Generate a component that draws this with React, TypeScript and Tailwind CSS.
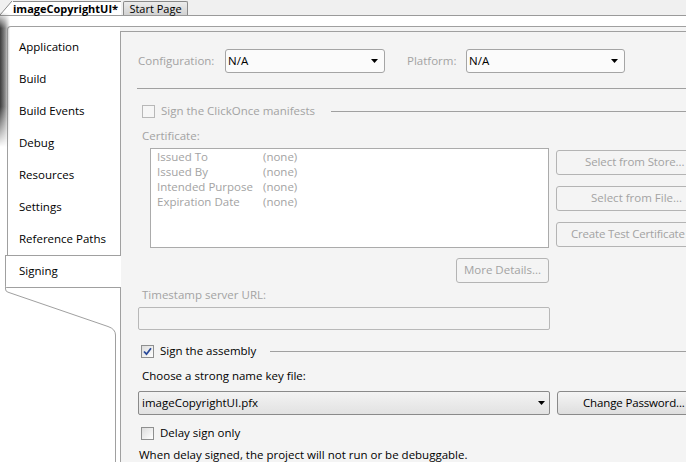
import React from "react";

const FONT = { fontFamily: '"Segoe UI", "Open Sans", sans-serif' };

function Arrow() {
  return (
    <svg width="7" height="4" viewBox="0 0 7 4" className="shrink-0">
      <polygon points="0,0 7,0 3.5,4" fill="#000" />
    </svg>
  );
}

function Check({ checked, disabled }: { checked?: boolean; disabled?: boolean }) {
  return (
    <div
      className={
        "w-[13px] h-[13px] shrink-0 border flex items-center justify-center " +
        (disabled
          ? "border-[#b8b8b8] bg-[#f6f6f6]"
          : "border-[#8e8f8f] bg-gradient-to-br from-[#dcdcdc] to-[#ffffff]")
      }
    >
      {checked && (
        <svg width="9" height="9" viewBox="0 0 9 9">
          <path d="M1 4.5 L3.5 7.2 L8 1.2" stroke="#2a4a9a" strokeWidth="1.8" fill="none" />
        </svg>
      )}
    </div>
  );
}

const navItems = [
  "Application",
  "Build",
  "Build Events",
  "Debug",
  "Resources",
  "Settings",
  "Reference Paths",
];

const certRows = [
  ["Issued To", "(none)"],
  ["Issued By", "(none)"],
  ["Intended Purpose", "(none)"],
  ["Expiration Date", "(none)"],
];

export default function App() {
  return (
    <div
      className="relative w-[686px] h-[462px] overflow-hidden bg-white text-[11.5px] text-black leading-none"
      style={FONT}
    >
      {/* document tab strip */}
      <div className="h-[16px] bg-[#f0f0f0] border-b border-[#9a9a9a] flex items-end">
        <svg width="13" height="15" viewBox="0 0 13 15" className="shrink-0">
          <polygon points="0,15 12,1 13,1 13,15" fill="#ffffff" />
          <line x1="0" y1="15" x2="12" y2="1" stroke="#8a8a8a" />
        </svg>
        <div className="h-[14px] w-[108px] bg-white border-t border-[#8a8a8a] font-bold text-[11px] flex items-center pb-[1px]">
          imageCopyrightUI*
        </div>
        <div className="ml-[2px] h-[14px] w-[65px] border border-b-0 border-[#8a8a8a] rounded-t-[2px] bg-gradient-to-b from-[#ececec] to-[#d2d2d2] flex items-center justify-center text-[11px] pb-[1px]">
          Start Page
        </div>
      </div>
      <div className="h-[10px] bg-white" />

      {/* frame */}
      <div className="flex h-[436px]">
        {/* nav */}
        <div className="w-[120px] shrink-0 flex flex-col bg-white">
          <div className="ml-[7px] border-l border-t border-[#a0a0a0] rounded-tl-[4px] pt-[4px]">
            {navItems.map((n) => (
              <div key={n} className="h-[32px] flex items-center pl-[11px] pb-[1px]">
                {n}
              </div>
            ))}
          </div>
          <div className="relative z-10 ml-[5px] w-[116px] h-[33px] border-l border-t border-b border-[#a0a0a0] rounded-bl-[2px] bg-white flex items-center pl-[13px] pb-[1px]">
            Signing
          </div>
          <svg width="120" height="60" viewBox="0 0 120 60" className="shrink-0 -mt-[1px]">
            <path
              d="M5.5 0 L5.5 2 Q5.5 4.5 8 5.2 L108 39.5 Q115.5 42 115.5 48 L115.5 60"
              stroke="#a0a0a0"
              fill="none"
            />
          </svg>
          <div className="flex-1 ml-[115px] border-l border-[#a0a0a0]" />
        </div>

        {/* content */}
        <div className="flex-1 border-t border-[#a0a0a0] bg-[#f4f4f4] pt-[4px] flex flex-col min-w-0">
          <div className="flex-1 border-t border-l border-[#a0a0a0] bg-[#f4f4f4] flex flex-col">
            {/* config row */}
            <div className="mt-[17px] ml-[17px] flex items-center h-[24px]">
              <div className="w-[87px] text-[#a3a3a3] pb-[1px]">Configuration:</div>
              <div className="w-[160px] h-[24px] border border-[#a5a5a5] rounded-[3px] bg-[#fbfbfb] flex items-center justify-between pl-[2px] pr-[6px]">
                <span className="pb-[1px]">N/A</span>
                <Arrow />
              </div>
              <div className="ml-[22px] w-[59px] text-[#a3a3a3] pb-[1px]">Platform:</div>
              <div className="w-[159px] h-[24px] border border-[#a5a5a5] rounded-[3px] bg-[#fbfbfb] flex items-center justify-between pl-[2px] pr-[6px]">
                <span className="pb-[1px]">N/A</span>
                <Arrow />
              </div>
            </div>
            <div className="mt-[15px] ml-[16px] h-px bg-[#a0a0a0]" />

            {/* clickonce */}
            <div className="mt-[14px] ml-[21px] h-[16px] flex items-center">
              <Check disabled />
              <span className="ml-[6px] text-[#a3a3a3] pb-[1px]">Sign the ClickOnce manifests</span>
              <div className="ml-[16px] flex-1 h-px bg-[#a0a0a0]" />
            </div>
            <div className="mt-[9px] ml-[21px] h-[16px] flex items-center text-[#a3a3a3] pb-[1px]">
              Certificate:
            </div>

            {/* certificate */}
            <div className="mt-[4px] flex">
              <div className="ml-[29px] w-[399px] h-[100px] border border-[#ababab] bg-white pt-[0px] pl-[6px] text-[#a3a3a3] shrink-0">
                {certRows.map(([a, b]) => (
                  <div key={a} className="h-[15px] flex items-center">
                    <span className="w-[106px]">{a}</span>
                    <span>{b}</span>
                  </div>
                ))}
              </div>
              <div className="ml-[7px] mt-[2px] flex flex-col gap-[11px] shrink-0">
                <div className="w-[160px] h-[25px] border border-[#b4b4b4] rounded-[3px] bg-[#f4f4f4] flex items-center pl-[28px] text-[#a3a3a3] pb-[1px] tracking-[-0.1px]">
                  Select from Store...
                </div>
                <div className="w-[160px] h-[25px] border border-[#b4b4b4] rounded-[3px] bg-[#f4f4f4] flex items-center pl-[34px] text-[#a3a3a3] pb-[1px]">
                  Select from File...
                </div>
                <div className="w-[160px] h-[25px] border border-[#b4b4b4] rounded-[3px] bg-[#f4f4f4] flex items-center pl-[14px] text-[#a3a3a3] pb-[1px] tracking-[-0.2px]">
                  Create Test Certificate
                </div>
              </div>
            </div>

            <div className="mt-[10px] ml-[335px] w-[93px] h-[25px] border border-[#b4b4b4] rounded-[3px] bg-[#f4f4f4] flex items-center justify-center text-[#a3a3a3] pb-[1px]">
              More Details...
            </div>
            <div className="mt-[4px] ml-[21px] h-[16px] flex items-center text-[#a3a3a3] pb-[1px]">
              Timestamp server URL:
            </div>
            <div className="mt-[4px] ml-[17px] w-[412px] h-[23px] border border-[#b8b8b8] rounded-[2px] bg-[#f4f4f4]" />

            {/* sign the assembly */}
            <div className="mt-[13px] ml-[20px] h-[16px] flex items-center">
              <Check checked />
              <span className="ml-[6px] pb-[1px]">Sign the assembly</span>
              <div className="ml-[14px] flex-1 h-px bg-[#a0a0a0]" />
            </div>
            <div className="mt-[9px] ml-[21px] h-[16px] flex items-center pb-[1px]">
              Choose a strong name key file:
            </div>
            <div className="mt-[7px] ml-[17px] flex items-center">
              <div className="w-[412px] h-[24px] border border-[#8a8a8a] rounded-[2px] bg-gradient-to-b from-[#f3f3f3] to-[#e2e2e2] flex items-center justify-between pl-[3px] pr-[4px] shrink-0">
                <span className="pb-[1px]">imageCopyrightUI.pfx</span>
                <Arrow />
              </div>
              <div className="ml-[7px] w-[160px] h-[24px] border border-[#8a8a8a] rounded-[3px] bg-gradient-to-b from-[#f5f5f5] to-[#dedede] flex items-center pl-[25px] shrink-0 pb-[1px] tracking-[-0.15px]">
                Change Password...
              </div>
            </div>
            <div className="mt-[10px] ml-[20px] h-[16px] flex items-center">
              <Check />
              <span className="ml-[6px] pb-[1px]">Delay sign only</span>
            </div>
            <div className="mt-[6px] ml-[18px] h-[16px] flex items-center pb-[1px]">
              When delay signed, the project will not run or be debuggable.
            </div>
          </div>
        </div>
      </div>

      {/* left edge shadow */}
      <div className="absolute left-0 top-[12px] w-[10px] h-[135px] bg-gradient-to-r from-[#3c3c3c] via-[#8a8a8a] to-transparent [mask-image:linear-gradient(to_bottom,transparent,black_12%,black_70%,transparent)]" />
    </div>
  );
}
